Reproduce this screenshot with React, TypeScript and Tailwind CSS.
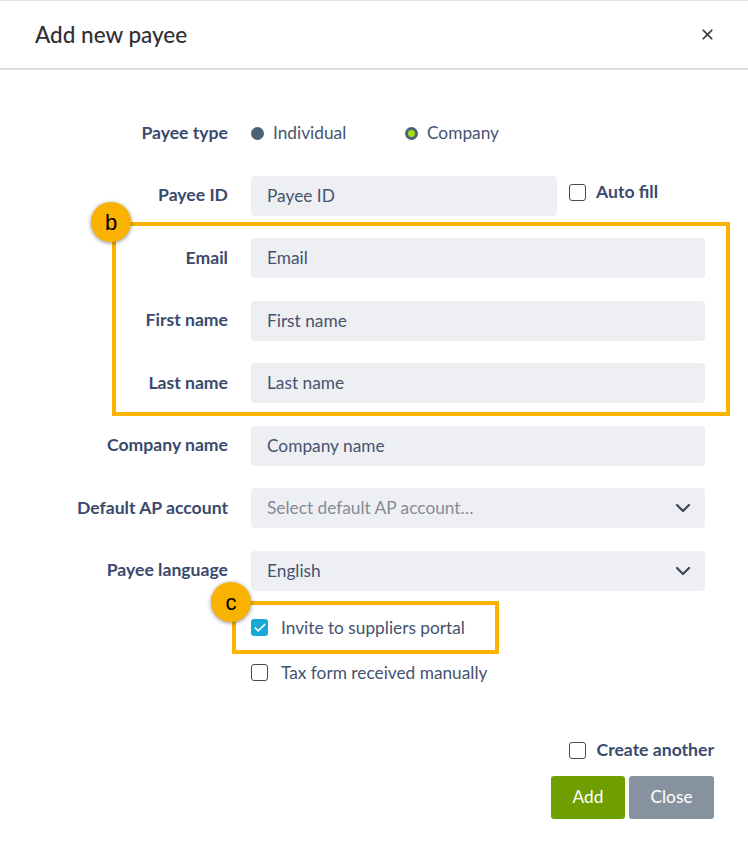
import React from "react";
import { ChevronDown, X, Check } from "lucide-react";

const labelCls = "w-[228px] shrink-0 text-right text-[17.6px] font-bold text-[#3a4a6c]";
const fieldCls = "h-10 rounded-[4px] bg-[#eeeff3] px-4 flex items-center text-[17.3px]";
const inputCls = `${fieldCls} text-[#45536f]`;

const Row: React.FC<{ label: string; children: React.ReactNode }> = ({ label, children }) => (
  <div className="flex items-center gap-[23px] h-10">
    <div className={labelCls}>{label}</div>
    {children}
  </div>
);

const Box: React.FC<{ checked?: boolean }> = ({ checked }) =>
  checked ? (
    <span className="w-[17px] h-[17px] rounded-[3px] bg-[#16a9d8] flex items-center justify-center">
      <Check size={14} strokeWidth={3} color="#fff" />
    </span>
  ) : (
    <span className="w-[17px] h-[17px] rounded-[3px] border-[1.5px] border-[#4a4a4a] bg-white" />
  );

// numbered callout marker
const Marker: React.FC<{ letter: string; className: string }> = ({ letter, className }) => (
  <div
    className={`absolute w-10 h-10 rounded-full bg-[#f9b200] shadow-[0_1px_4px_rgba(0,0,0,0.45)] flex items-center justify-center text-[22px] text-black font-['Liberation_Sans',sans-serif] ${className}`}
  >
    {letter}
  </div>
);

export default function App() {
  return (
    <div className="relative w-[748px] h-[851px] bg-white font-['Lato',sans-serif] border-t border-[#e3e4ea]">
      {/* Header */}
      <div className="h-[69px] border-b-2 border-[#dcdde3] flex items-center justify-between pl-[35px] pr-[32px]">
        <h1 className="text-[22.5px] text-[#2f2f33] font-medium">Add new payee</h1>
        <X size={17} strokeWidth={2.4} color="#333" />
      </div>

      {/* Form */}
      <div className="flex flex-col gap-[22.5px] pt-[43px]">
        <Row label="Payee type">
          <div className="flex items-center text-[17.3px] text-[#45536f]">
            <span className="w-[13px] h-[13px] rounded-full bg-[#4a6376]" />
            <span className="ml-[9px] w-[132px]">Individual</span>
            <span className="w-[13px] h-[13px] rounded-full bg-[#4a6376] flex items-center justify-center">
              <span className="w-[7px] h-[7px] rounded-full bg-[#a3dc12]" />
            </span>
            <span className="ml-[9px]">Company</span>
          </div>
        </Row>
        <Row label="Payee ID">
          <div className={`${inputCls} w-[306px]`}>Payee ID</div>
          <div className="flex items-center gap-[10px] -ml-[11px] -mt-[6px]">
            <Box />
            <span className="text-[17.6px] font-bold text-[#3a4a6c]">Auto fill</span>
          </div>
        </Row>
        <Row label="Email">
          <div className={`${inputCls} w-[454px]`}>Email</div>
        </Row>
        <Row label="First name">
          <div className={`${inputCls} w-[454px]`}>First name</div>
        </Row>
        <Row label="Last name">
          <div className={`${inputCls} w-[454px]`}>Last name</div>
        </Row>
        <Row label="Company name">
          <div className={`${inputCls} w-[454px]`}>Company name</div>
        </Row>
        <Row label="Default AP account">
          <div className={`${fieldCls} w-[454px] justify-between pr-[10px] text-[#858b95]`}>
            <span>Select default AP account…</span>
            <ChevronDown size={24} strokeWidth={2.2} color="#3b4656" />
          </div>
        </Row>
        <Row label="Payee language">
          <div className={`${inputCls} w-[454px] justify-between pr-[10px]`}>
            <span>English</span>
            <ChevronDown size={24} strokeWidth={2.2} color="#3b4656" />
          </div>
        </Row>
      </div>

      {/* Options */}
      <div className="pl-[251px] mt-[28px] flex flex-col gap-[27px] text-[17.3px] text-[#45536f]">
        <label className="flex items-center gap-[13px] h-[18px]">
          <Box checked />
          <span>Invite to suppliers portal</span>
        </label>
        <label className="flex items-center gap-[13px] h-[18px]">
          <Box />
          <span>Tax form received manually</span>
        </label>
      </div>

      {/* Footer */}
      <div className="flex flex-col items-end pr-[34px] mt-[59px]">
        <label className="flex items-center gap-[11px] h-[20px]">
          <Box />
          <span className="text-[17.6px] font-bold text-[#3a4a6c]">Create another</span>
        </label>
        <div className="flex gap-[4px] mt-[15px]">
          <button className="w-[74px] h-[43px] rounded-[3px] bg-[#6f9e00] text-white text-[17.3px]">
            Add
          </button>
          <button className="w-[85px] h-[43px] rounded-[3px] bg-[#86939f] text-white text-[17.3px]">
            Close
          </button>
        </div>
      </div>

      {/* Callouts */}
      <div className="absolute left-[112px] top-[221px] w-[618px] h-[194px] border-[4px] border-[#f9b200]" />
      <Marker letter="b" className="left-[91px] top-[201px]" />
      <div className="absolute left-[232px] top-[600px] w-[267px] h-[53px] border-[4px] border-[#f9b200]" />
      <Marker letter="c" className="left-[211px] top-[581px]" />
    </div>
  );
}
